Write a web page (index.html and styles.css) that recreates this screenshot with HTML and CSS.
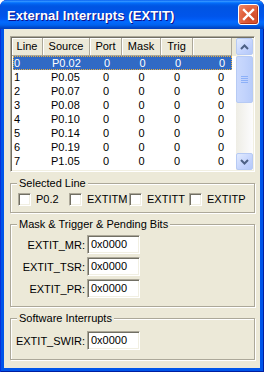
FILE: index.html
```html
<!DOCTYPE html>
<html lang="en">
<head>
    <meta charset="UTF-8">
    <title>External Interrupts (EXTIT)</title>
    <link rel="stylesheet" href="styles.css">
</head>
<body>
    <div class="window">
        <!-- 타이틀바 -->
        <div class="titlebar">
            <span class="title">External Interrupts (EXTIT)</span>
            <span class="close">
                <svg width="13" height="13" viewBox="0 0 13 13">
                    <path d="M2 2 L11 11 M11 2 L2 11" stroke="#fff" stroke-width="2.4" stroke-linecap="square"/>
                </svg>
            </span>
        </div>

        <div class="client">
            <!-- 라인 목록 -->
            <div class="listbox">
                <div class="list">
                    <div class="row head">
                        <span>Line</span><span>Source</span><span>Port</span><span>Mask</span><span>Trig</span><span></span>
                    </div>
                    <div class="row sel">
                        <span>0</span><span>P0.02</span><span>0</span><span>0</span><span>0</span><span>0</span>
                    </div>
                    <div class="row">
                        <span>1</span><span>P0.05</span><span>0</span><span>0</span><span>0</span><span>0</span>
                    </div>
                    <div class="row">
                        <span>2</span><span>P0.07</span><span>0</span><span>0</span><span>0</span><span>0</span>
                    </div>
                    <div class="row">
                        <span>3</span><span>P0.08</span><span>0</span><span>0</span><span>0</span><span>0</span>
                    </div>
                    <div class="row">
                        <span>4</span><span>P0.10</span><span>0</span><span>0</span><span>0</span><span>0</span>
                    </div>
                    <div class="row">
                        <span>5</span><span>P0.14</span><span>0</span><span>0</span><span>0</span><span>0</span>
                    </div>
                    <div class="row">
                        <span>6</span><span>P0.19</span><span>0</span><span>0</span><span>0</span><span>0</span>
                    </div>
                    <div class="row">
                        <span>7</span><span>P1.05</span><span>0</span><span>0</span><span>0</span><span>0</span>
                    </div>
                </div>
                <div class="scrollbar">
                    <div class="sb-btn">
                        <svg width="9" height="6" viewBox="0 0 9 6"><path d="M1 5 L4.5 1.5 L8 5" fill="none" stroke="#4D6185" stroke-width="2"/></svg>
                    </div>
                    <div class="sb-track">
                        <div class="sb-thumb">
                            <svg width="7" height="8" viewBox="0 0 7 8"><path d="M0 0.5 H7 M0 2.5 H7 M0 4.5 H7 M0 6.5 H7" stroke="#8CB0F8" stroke-width="1"/></svg>
                        </div>
                    </div>
                    <div class="sb-btn">
                        <svg width="9" height="6" viewBox="0 0 9 6"><path d="M1 1 L4.5 4.5 L8 1" fill="none" stroke="#4D6185" stroke-width="2"/></svg>
                    </div>
                </div>
            </div>

            <!-- 선택된 라인 -->
            <fieldset class="group group-sel">
                <legend>Selected Line</legend>
                <div class="checks">
                    <label class="chk"><span class="box"></span>P0.2</label>
                    <label class="chk"><span class="box"></span>EXTITM</label>
                    <label class="chk"><span class="box"></span>EXTITT</label>
                    <label class="chk"><span class="box"></span>EXTITP</label>
                </div>
            </fieldset>

            <!-- 레지스터 -->
            <fieldset class="group group-bits">
                <legend>Mask &amp; Trigger &amp; Pending Bits</legend>
                <div class="fields">
                    <span class="lbl">EXTIT_MR:</span><span class="edit">0x0000</span>
                    <span class="lbl">EXTIT_TSR:</span><span class="edit">0x0000</span>
                    <span class="lbl">EXTIT_PR:</span><span class="edit">0x0000</span>
                </div>
            </fieldset>

            <fieldset class="group group-sw">
                <legend>Software Interrupts</legend>
                <div class="fields">
                    <span class="lbl">EXTIT_SWIR:</span><span class="edit">0x0000</span>
                </div>
            </fieldset>
        </div>
    </div>
</body>
</html>
```

FILE: styles.css
```css
body {
    margin: 0;
    font-family: "Liberation Sans", Arial, sans-serif;
    font-size: 11px;
    color: #000;
}

/* 창 프레임 */
.window {
    width: 264px;
    height: 372px;
    box-sizing: border-box;
    display: flex;
    flex-direction: column;
    padding: 0 4px 4px;
    background: #0055EA;
    border-radius: 7px 7px 0 0;
    box-shadow: inset 1px 0 #0831D9, inset -1px 0 #001EA0, inset 0 -1px #001EA0;
    overflow: hidden;
}

/* 타이틀바 */
.titlebar {
    height: 29px;
    margin: 0 -4px;
    padding: 0 5px 0 7px;
    display: flex;
    align-items: center;
    justify-content: space-between;
    border-radius: 7px 7px 0 0;
    background: linear-gradient(to bottom,
        #0058EE 0%, #3593FF 4%, #288EFF 6%, #127DFF 8%, #036FFC 10%,
        #0262EE 14%, #0057E5 20%, #0054E3 24%, #0055EB 56%, #005BF5 66%,
        #026AFE 76%, #0062EF 86%, #0052D6 92%, #0046C8 96%, #0040BE 100%);
}

.title {
    color: #fff;
    font-weight: bold;
    font-size: 13px;
    letter-spacing: 0.1px;
    text-shadow: 1px 1px #0F1089;
    margin-top: 1px;
}

.close {
    width: 19px;
    height: 19px;
    border: 1px solid #fff;
    border-radius: 3px;
    display: flex;
    align-items: center;
    justify-content: center;
    background: radial-gradient(circle at 70% 70%, #CC4625 0%, #E2633F 55%, #F08A6C 100%);
    box-shadow: inset -1px -1px #B4361A;
}

/* 클라이언트 영역 */
.client {
    flex: 1;
    background: #ECE9D8;
    padding: 7px 5px 0 6px;
    display: flex;
    flex-direction: column;
}

/* 들어간 테두리 공통 */
.listbox,
.edit,
.box {
    border: 1px solid;
    border-color: #ACA899 #fff #fff #ACA899;
    box-shadow: inset 1px 1px #716F64, inset -1px -1px #F1EFE2;
    background: #fff;
}

/* 목록 */
.listbox {
    height: 136px;
    box-sizing: border-box;
    padding: 1px;
    display: flex;
}

.list {
    flex: 1;
    background: linear-gradient(#ECE9D8, #ECE9D8) top / 100% 18px no-repeat;
}

.row {
    display: grid;
    grid-template-columns: 31px 47px 32px 39px 32px 39px;
    width: 220px;
    height: 14px;
    line-height: 14px;
}

.row span {
    text-align: center;
}

.row span:nth-child(1) {
    text-align: left;
    padding-left: 2px;
}

.row span:nth-child(2) {
    text-align: left;
    padding-left: 8px;
}

.row span:nth-child(6) {
    text-align: right;
    padding-right: 8px;
}

.row.head {
    height: 18px;
    line-height: 17px;
}

.row.head span {
    text-align: center;
    padding: 0;
    border-right: 1px solid #ACA899;
    border-bottom: 1px solid #ACA899;
    box-shadow: inset 1px 1px #fff;
}

.row.sel {
    color: #fff;
    background: #316AC5;
    outline: 1px dotted #E8B040;
    outline-offset: -1px;
    width: 219px;
    margin-left: 1px;
}

.row.sel span:nth-child(1) {
    padding-left: 1px;
}

/* 스크롤바 */
.scrollbar {
    width: 17px;
    display: flex;
    flex-direction: column;
    background: linear-gradient(to right, #EEEDE5, #FCFCFE);
}

.sb-btn {
    height: 17px;
    box-sizing: border-box;
    border: 1px solid #B6CAF4;
    border-radius: 2px;
    background: linear-gradient(135deg, #E2EBFE, #C3D3FD 60%, #B4C8F8);
    display: flex;
    align-items: center;
    justify-content: center;
}

.sb-track {
    flex: 1;
    padding: 1px 0;
}

.sb-thumb {
    height: 47px;
    box-sizing: border-box;
    border: 1px solid #B6CAF4;
    border-radius: 2px;
    background: linear-gradient(to right, #CAD9FD, #C2D3FC 50%, #B8CCFA);
    display: flex;
    align-items: center;
    justify-content: center;
}

/* 그룹박스 (음각 테두리) */
.group {
    margin: 5px 0 0;
    padding: 0;
    border: 1px solid #ACA899;
    box-shadow: inset 1px 1px #fff, 1px 1px #fff;
    min-width: 0;
}

.group legend {
    margin-left: 6px;
    padding: 0 2px;
    line-height: 13px;
    height: 13px;
    background: #ECE9D8;
}

.checks {
    display: grid;
    grid-template-columns: 51px 60px 60px auto;
    padding: 3px 0 6px 7px;
}

.chk {
    display: flex;
    align-items: center;
    height: 13px;
    line-height: 13px;
}

.box {
    width: 11px;
    height: 11px;
    margin-right: 5px;
    flex: none;
}

.fields {
    display: grid;
    grid-template-columns: 74px 53px;
    column-gap: 2px;
    row-gap: 3px;
    align-items: center;
}

.group-bits .fields {
    padding: 4px 0 8px;
}

.group-sw .fields {
    padding: 6px 0 9px;
}

.lbl {
    text-align: right;
}

.edit {
    height: 17px;
    line-height: 17px;
    padding-left: 3px;
}
```
